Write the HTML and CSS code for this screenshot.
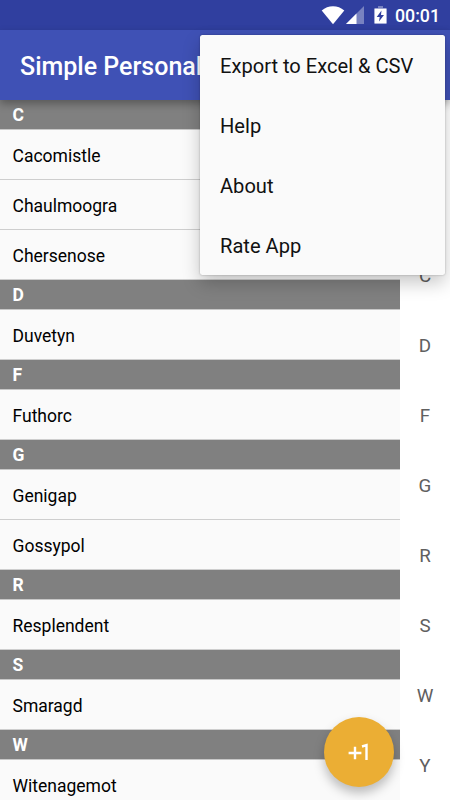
FILE: index.html
```html
<!DOCTYPE html>
<html lang="en">
<head>
    <meta charset="UTF-8">
    <meta name="viewport" content="width=device-width, initial-scale=1.0">
    <title>Simple Personal</title>
    <link rel="stylesheet" href="styles.css">
</head>
<body>
    <div class="screen">
        <div class="status-bar">
            <svg class="wifi" width="24" height="20" viewBox="0 0 24 20">
                <path d="M.7 5.500C7 -.2 17 -.2 23.300 5.500L12 19.200z" fill="#fff"/>
            </svg>
            <svg class="signal" width="18" height="18" viewBox="0 0 18 18">
                <path d="M0 18L18 0V18z" fill="#fff" fill-opacity=".35"/>
                <path d="M0 18L10.500 7.500V18z" fill="#fff"/>
            </svg>
            <svg class="battery" width="13" height="18" viewBox="0 0 13 18">
                <path d="M4 0h5v2h3.500v15.500h-12V2H4z" fill="#fff" fill-opacity=".35"/>
                <path d="M.5 2.700h12V17.500h-12z" fill="#fff"/>
                <path d="M7.500 4.500L2.700 11h3L5 15.500l5-6.500H7z" fill="#303f9f"/>
            </svg>
            <span class="clock">00:01</span>
        </div>
        <div class="toolbar">
            <h1>Simple Personal</h1>
        </div>
        <div class="content">
            <ul class="list">
                <li class="header">C</li>
                <li class="row">Cacomistle</li>
                <li class="row">Chaulmoogra</li>
                <li class="row">Chersenose</li>
                <li class="header">D</li>
                <li class="row">Duvetyn</li>
                <li class="header">F</li>
                <li class="row">Futhorc</li>
                <li class="header">G</li>
                <li class="row">Genigap</li>
                <li class="row">Gossypol</li>
                <li class="header">R</li>
                <li class="row">Resplendent</li>
                <li class="header">S</li>
                <li class="row">Smaragd</li>
                <li class="header">W</li>
                <li class="row">Witenagemot</li>
            </ul>
            <div class="index">
                <span>C</span>
                <span>D</span>
                <span>F</span>
                <span>G</span>
                <span>R</span>
                <span>S</span>
                <span>W</span>
                <span>Y</span>
            </div>
        </div>
        <div class="menu">
            <div class="item">Export to Excel &amp; CSV</div>
            <div class="item">Help</div>
            <div class="item">About</div>
            <div class="item">Rate App</div>
        </div>
        <button class="fab" aria-label="Add one">
            <svg width="22" height="18" viewBox="0 0 22 18">
                <path d="M7 3.800v12.400M.6 10h12.800M14 3.500L18.500 2.200V17" fill="none" stroke="#fff" stroke-width="2.400"/>
            </svg>
        </button>
    </div>
</body>
</html>
```

FILE: styles.css
```css
* {
    box-sizing: border-box;
}
body {
    margin: 0;
    font-family: Roboto, sans-serif;
    background: white;
}
.screen {
    position: relative;
    width: 450px;
    height: 800px;
    overflow: hidden;
}
.status-bar {
    display: flex;
    justify-content: flex-end;
    height: 30px;
    padding: 5px 10px 0 0;
    background: #303f9f;
    color: white;
}
.wifi {
    margin-right: 1px;
}
.signal {
    margin: 1px 10px 0 0;
}
.battery {
    margin: 1px 8px 0 0;
}
.clock {
    font-size: 17.75px;
    font-weight: 500;
    line-height: 22px;
}
.toolbar {
    position: relative;
    display: flex;
    align-items: center;
    height: 70px;
    padding: 3px 20px 0;
    background: #3f51b5;
    color: white;
    box-shadow: 0 4px 8px rgba(0, 0, 0, 0.3);
}
.toolbar h1 {
    margin: 0;
    font-size: 25px;
    font-weight: 500;
}
.content {
    display: flex;
    height: 700px;
}
.list {
    width: 400px;
    margin: 0;
    padding: 0;
    list-style: none;
    background: #fafafa;
    font-size: 17.5px;
}
.header {
    height: 30px;
    padding-left: 12.5px;
    border-bottom: 1px solid #c8c8c8;
    background: #808080;
    color: white;
    font-weight: 700;
    line-height: 31px;
}
.row {
    height: 50px;
    padding-left: 12.5px;
    border-bottom: 1px solid #cecece;
    color: #000;
    line-height: 52px;
}
.index {
    display: flex;
    flex-direction: column;
    width: 50px;
    padding-top: 140px;
    color: #606060;
    font-size: 18.75px;
    line-height: 72px;
    text-align: center;
}
.index span {
    height: 70px;
}
.menu {
    position: absolute;
    top: 35px;
    left: 200px;
    width: 245px;
    height: 240px;
    border-radius: 2.5px;
    background: #fafafa;
    box-shadow: 0 8px 18px rgba(0, 0, 0, 0.22), 0 0 2px rgba(0, 0, 0, 0.3);
}
.item {
    height: 60px;
    padding-left: 20px;
    color: #111;
    font-size: 20.1px;
    line-height: 62px;
}
.fab {
    position: absolute;
    top: 717px;
    left: 324px;
    display: flex;
    align-items: center;
    justify-content: center;
    width: 70px;
    height: 70px;
    padding: 0;
    border: none;
    border-radius: 50%;
    background: #ebae34;
    box-shadow: 0 6px 11px rgba(0, 0, 0, 0.26);
}
```
